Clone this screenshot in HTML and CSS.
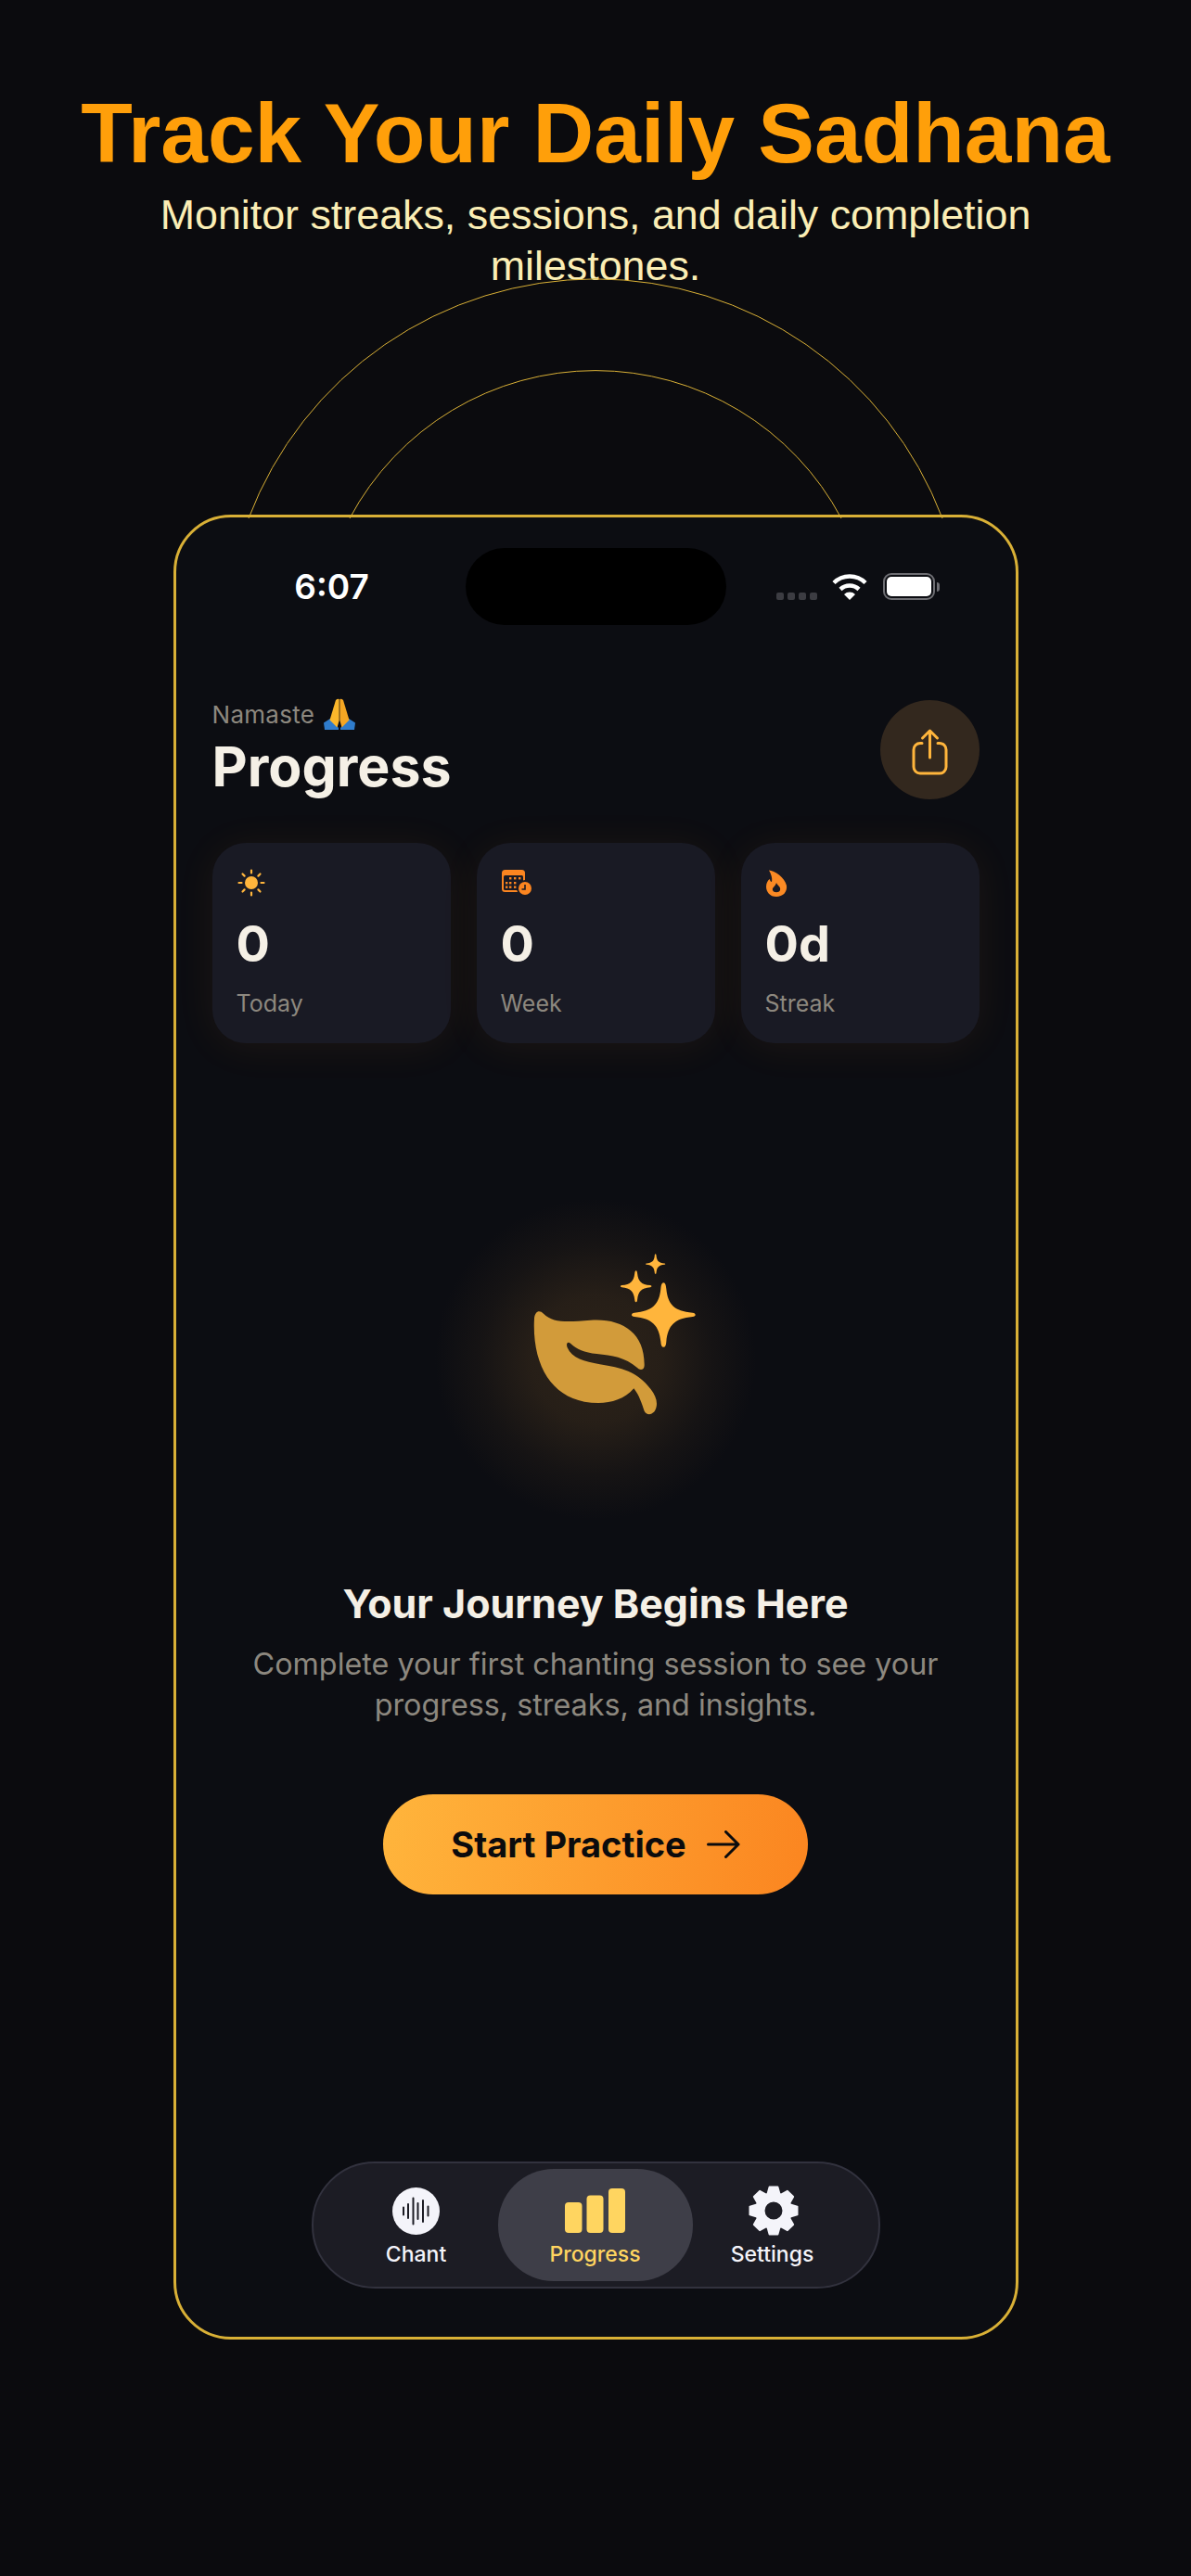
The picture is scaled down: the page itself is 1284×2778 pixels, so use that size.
FILE: index.html
```html
<!DOCTYPE html>
<html lang="en">
<head>
    <meta charset="UTF-8">
    <meta name="viewport" content="width=device-width, initial-scale=1.0">
    <title>Track Your Daily Sadhana</title>
    <link rel="stylesheet" href="styles.css">
</head>
<body>
    <!-- Marketing header -->
    <header class="promo">
        <h1 class="promo-title">Track Your Daily Sadhana</h1>
        <p class="promo-sub">Monitor streaks, sessions, and daily completion milestones.</p>
    </header>

    <!-- Decorative rings behind the phone -->
    <svg class="rings" width="1284" height="570" viewBox="0 0 1284 570" fill="none">
        <path d="M268 559A400 400 0 0 1 1016 559"/>
        <path d="M377 559A300 300 0 0 1 907 559"/>
    </svg>

    <main class="phone">
        <div class="status-bar">
            <div class="status-time">6:07</div>
            <div class="island"></div>
            <div class="status-icons">
                <div class="signal"><span></span><span></span><span></span><span></span></div>
                <svg class="wifi" width="38" height="28" viewBox="0 0 38 28" fill="none" stroke="#fff" stroke-width="4.5">
                    <path d="M2 9.5A24 24 0 0 1 36 9.5"/>
                    <path d="M9 16.5A14.5 14.5 0 0 1 29 16.5"/>
                    <path d="M13 22A8.5 8.5 0 0 1 25 22L19 28Z" fill="#fff" stroke="none"/>
                </svg>
                <div class="battery"><div class="battery-fill"></div></div>
                <div class="battery-tip"></div>
            </div>
        </div>

        <div class="head-row">
            <div>
                <div class="greeting">
                    <span>Namaste</span>
                    <svg width="36" height="34" viewBox="0 0 36 34">
                        <path d="M1 26.5L8 22L17 32V34H2Z" fill="#2f7ccc"/>
                        <path d="M35 26.5L28 22L19 32V34H34Z" fill="#2f7ccc"/>
                        <path d="M14 2Q16 0 17.6 1L17.6 24L15.5 31.5L7.5 23.5Z" fill="#fbb72b"/>
                        <path d="M22 2Q20 0 18.4 1L18.4 24L20.5 31.5L28.5 23.5Z" fill="#f5a623"/>
                    </svg>
                </div>
                <h2 class="page-title">Progress</h2>
            </div>
            <button class="share-btn">
                <svg width="107" height="107" viewBox="0 0 107 107" fill="none" stroke="#ffb53c" stroke-width="3" stroke-linecap="round" stroke-linejoin="round">
                    <path d="M45 46.5H43a7 7 0 0 0-7 7V72a7 7 0 0 0 7 7H64a7 7 0 0 0 7-7V53.5a7 7 0 0 0-7-7H62"/>
                    <path d="M53.5 62V33M45.5 41L53.5 33L61.5 41"/>
                </svg>
            </button>
        </div>

        <!-- Stat cards -->
        <section class="stats">
            <div class="stat-card">
                <div class="stat-icon">
                    <svg width="34" height="34" viewBox="0 0 34 34" stroke="#ffb53c" stroke-width="2.2" stroke-linecap="round">
                        <circle cx="16" cy="16" r="7" fill="#ffb53c" stroke="none"/>
                        <path d="M16 2.5V5.5M16 26.5V29.5M2.5 16H5.5M26.5 16H29.5M6.5 6.5L8.6 8.6M23.4 23.4L25.5 25.5M6.5 25.5L8.6 23.4M23.4 8.6L25.5 6.5"/>
                    </svg>
                </div>
                <div class="stat-value">0</div>
                <div class="stat-label">Today</div>
            </div>
            <div class="stat-card">
                <div class="stat-icon">
                    <svg width="34" height="34" viewBox="0 0 34 34">
                        <rect x="1" y="2" width="25" height="24" rx="3.5" fill="#fb8520"/>
                        <rect x="3" y="8" width="21" height="16" rx="1.5" fill="#191a24"/>
                        <g fill="#fb8520">
                            <rect x="9" y="10" width="2.4" height="2.4"/><rect x="14" y="10" width="2.4" height="2.4"/><rect x="19" y="10" width="2.4" height="2.4"/>
                            <rect x="5" y="15" width="2.4" height="2.4"/><rect x="9" y="15" width="2.4" height="2.4"/><rect x="14" y="15" width="2.4" height="2.4"/>
                            <rect x="5" y="19.5" width="2.4" height="2.4"/><rect x="9" y="19.5" width="2.4" height="2.4"/><rect x="14" y="19.5" width="2.4" height="2.4"/>
                        </g>
                        <circle cx="26" cy="22" r="9" fill="#191a24"/>
                        <circle cx="26" cy="22" r="7" fill="#fb8520"/>
                        <path d="M26 18V23H22.5" fill="none" stroke="#191a24" stroke-width="1.6"/>
                    </svg>
                </div>
                <div class="stat-value">0</div>
                <div class="stat-label">Week</div>
            </div>
            <div class="stat-card">
                <div class="stat-icon">
                    <svg width="34" height="34" viewBox="0 0 34 34">
                        <path d="M4 2.5C10 3 21 10 23 19C24 26 19 31 12 31C5 31 1 26 1 20C1 16 3 13 5 12C5 14 6 15 7 15C8 11 6 6 4 2.5Z" fill="#fb8a24"/>
                        <path d="M12 16C13 19 17 20 16 24C15 27 9 27 8 24C7 21 11 20 12 16Z" fill="#191a24"/>
                    </svg>
                </div>
                <div class="stat-value">0d</div>
                <div class="stat-label">Streak</div>
            </div>
        </section>

        <!-- Empty state -->
        <section class="empty">
            <div class="empty-glow">
                <svg width="346" height="346" viewBox="87 9 1038 1038">
                    <path d="M408 395C410 372 425 366 438 380C470 412 520 406 590 401C690 394 766 440 764 548C764 562 750 564 742 556C700 520 660 515 610 510C570 505 545 495 525 476C515 468 510 478 515 490C530 525 570 535 620 544C690 556 740 565 785 625C800 645 808 665 802 685C796 708 772 712 764 695C755 670 748 645 730 622C690 668 630 675 570 665C460 645 400 540 408 395Z" fill="#d29b3a"/>
                    <g fill="#ffb53c">
                        <path transform="translate(826 383)" d="M0-103C6-103 8-93 9-83C14-33 34-11 94-6C106-5 106 6 94 7C34 12 14 37 9 87C8 99 6 105 0 105C-6 105-8 99-9 87C-14 37-36 12-94 7C-106 6-106-5-94-6C-36-11-14-33-9-83C-8-93-6-103 0-103Z"/>
                        <path transform="translate(737 291) scale(.49)" d="M0-103C6-103 8-93 9-83C14-33 34-11 94-6C106-5 106 6 94 7C34 12 14 37 9 87C8 99 6 105 0 105C-6 105-8 99-9 87C-14 37-36 12-94 7C-106 6-106-5-94-6C-36-11-14-33-9-83C-8-93-6-103 0-103Z"/>
                        <path transform="translate(800 219) scale(.31)" d="M0-103C6-103 8-93 9-83C14-33 34-11 94-6C106-5 106 6 94 7C34 12 14 37 9 87C8 99 6 105 0 105C-6 105-8 99-9 87C-14 37-36 12-94 7C-106 6-106-5-94-6C-36-11-14-33-9-83C-8-93-6-103 0-103Z"/>
                    </g>
                </svg>
            </div>
            <h3 class="empty-title">Your Journey Begins Here</h3>
            <p class="empty-text">Complete your first chanting session to see your progress, streaks, and insights.</p>
            <button class="start-btn">
                <span>Start Practice</span>
                <svg width="36" height="30" viewBox="0 0 36 30" fill="none" stroke="#0b0b0d" stroke-width="3" stroke-linecap="round" stroke-linejoin="round">
                    <path d="M1.5 15H34M20.5 1.5L34 15L20.5 28.5"/>
                </svg>
            </button>
        </section>

        <!-- Tab bar -->
        <nav class="tabbar">
            <div class="tab tab-chant">
                <div class="tab-icon">
                    <svg width="51" height="51" viewBox="0 0 51 51">
                        <circle cx="25.5" cy="25.5" r="25.5" fill="#f4f4fa"/>
                        <path d="M12 21.5V29.5M17 18V33M22.5 11.5V39.5M27.5 17V34M33 14V37M38.5 20.5V30.5" stroke="#1c1c24" stroke-width="2" stroke-linecap="round"/>
                    </svg>
                </div>
                <span class="tab-label">Chant</span>
            </div>
            <div class="tab tab-progress active">
                <div class="tab-icon">
                    <svg width="65" height="48" viewBox="0 0 65 48" fill="#ffd560">
                        <rect x="0" y="15" width="18.5" height="33" rx="4"/>
                        <rect x="23.5" y="7.5" width="18" height="40.5" rx="4"/>
                        <rect x="47" y="0" width="18" height="48" rx="4"/>
                    </svg>
                </div>
                <span class="tab-label">Progress</span>
            </div>
            <div class="tab tab-settings">
                <div class="tab-icon">
                    <svg width="54" height="54" viewBox="0 0 54 54" fill="#f4f4fa">
                        <path fill-rule="evenodd" d="M27 7a20 20 0 1 0 0 40a20 20 0 1 0 0-40ZM27 17.5a9.5 9.5 0 1 1 0 19a9.5 9.5 0 1 1 0-19Z"/>
                        <g stroke="#f4f4fa" stroke-width="2" stroke-linejoin="round">
                            <path d="M20.5 9L22.6 1.5H31.4L33.5 9Z"/>
                            <path d="M20.5 9L22.6 1.5H31.4L33.5 9Z" transform="rotate(45 27 27)"/>
                            <path d="M20.5 9L22.6 1.5H31.4L33.5 9Z" transform="rotate(90 27 27)"/>
                            <path d="M20.5 9L22.6 1.5H31.4L33.5 9Z" transform="rotate(135 27 27)"/>
                            <path d="M20.5 9L22.6 1.5H31.4L33.5 9Z" transform="rotate(180 27 27)"/>
                            <path d="M20.5 9L22.6 1.5H31.4L33.5 9Z" transform="rotate(225 27 27)"/>
                            <path d="M20.5 9L22.6 1.5H31.4L33.5 9Z" transform="rotate(270 27 27)"/>
                            <path d="M20.5 9L22.6 1.5H31.4L33.5 9Z" transform="rotate(315 27 27)"/>
                        </g>
                    </svg>
                </div>
                <span class="tab-label">Settings</span>
            </div>
        </nav>
    </main>
</body>
</html>
```

FILE: styles.css
```css
body {
    margin: 0;
    height: 2778px;
    background-color: #0b0b0e;
    font-family: Inter, "Noto Sans", sans-serif;
    position: relative;
    overflow: hidden;
}

h1, h2, h3, p {
    margin: 0;
}

button {
    border: none;
    padding: 0;
    font-family: inherit;
}

/* Marketing header */
.promo {
    padding-top: 94px;
    text-align: center;
    font-family: "Liberation Sans", Arial, sans-serif;
}
.promo-title {
    font-size: 91px;
    line-height: 100px;
    font-weight: 700;
    color: #ff9f0a;
}
.promo-sub {
    width: 1000px;
    margin: 10px auto 0;
    font-size: 44.8px;
    line-height: 55px;
    color: #fbeeb5;
}

.rings {
    position: absolute;
    left: 0;
    top: 0;
    z-index: 2;
}
.rings path {
    stroke: #d9b036;
    stroke-width: 1;
}

/* Phone frame */
.phone {
    box-sizing: border-box;
    width: 911px;
    height: 1968px;
    margin: 241px auto 0;
    border: 3px solid #d9b036;
    border-radius: 62px;
    background-color: #0c0d12;
    display: flex;
    flex-direction: column;
    position: relative;
    z-index: 1;
}

.status-bar {
    display: grid;
    grid-template-columns: 1fr 281px 1fr;
    align-items: center;
    margin-top: 33px;
    height: 83px;
}
.status-time {
    text-align: center;
    padding-left: 24px;
    font-size: 37px;
    font-weight: 600;
    color: #fff;
}
.island {
    height: 83px;
    border-radius: 42px;
    background-color: #000;
}
.status-icons {
    display: flex;
    align-items: center;
    padding-left: 54px;
}
.signal {
    display: flex;
    gap: 4px;
    align-self: flex-end;
    margin-right: 16px;
}
.signal span {
    width: 8px;
    height: 8px;
    border-radius: 2px;
    background-color: #3c3c42;
}
.battery {
    box-sizing: border-box;
    width: 56px;
    height: 29px;
    margin-left: 17px;
    padding: 2px;
    border: 2px solid #6e6e73;
    border-radius: 9px;
}
.battery-fill {
    height: 100%;
    border-radius: 5px;
    background-color: #fff;
}
.battery-tip {
    width: 3px;
    height: 10px;
    margin-left: 2px;
    border-radius: 0 3px 3px 0;
    background-color: #6e6e73;
}

/* Greeting row */
.head-row {
    display: flex;
    justify-content: space-between;
    align-items: center;
    margin-top: 79px;
    padding: 0 39px;
}
.greeting {
    display: flex;
    align-items: center;
    gap: 9px;
    height: 34px;
    margin-bottom: 4px;
    font-size: 26px;
    letter-spacing: 0.3px;
    color: #8d887f;
}
.page-title {
    font-size: 59px;
    line-height: 72px;
    font-weight: 700;
    color: #f5f0e6;
}
.share-btn {
    width: 107px;
    height: 107px;
    border-radius: 50%;
    background-color: #33281e;
}
.share-btn svg {
    display: block;
}

/* Stat cards */
.stats {
    display: grid;
    grid-template-columns: repeat(3, 257px);
    justify-content: space-between;
    margin-top: 46px;
    padding: 0 39px;
}
.stat-card {
    box-sizing: border-box;
    height: 216px;
    padding: 27px 26px 0;
    border-radius: 36px;
    background-color: #191a24;
    box-shadow: 0 4px 44px rgba(255, 160, 40, 0.07);
}
.stat-icon {
    height: 34px;
}
.stat-icon svg {
    display: block;
}
.stat-value {
    margin-top: 18px;
    font-size: 54px;
    line-height: 60px;
    font-weight: 700;
    color: #f5f0e6;
}
.stat-label {
    margin-top: 18px;
    font-size: 25px;
    line-height: 32px;
    color: #8d887f;
}

/* Empty state */
.empty {
    display: flex;
    flex-direction: column;
    align-items: center;
    margin-top: 168px;
}
.empty-glow {
    width: 346px;
    height: 346px;
    background: radial-gradient(circle closest-side, #2d2319 0%, rgba(45, 35, 25, 0.8) 40%, rgba(45, 35, 25, 0.3) 72%, rgba(45, 35, 25, 0) 100%);
}
.empty-glow svg {
    display: block;
}
.empty-title {
    margin-top: 65px;
    font-size: 43px;
    line-height: 50px;
    font-weight: 700;
    color: #f5f0e6;
}
.empty-text {
    width: 760px;
    margin-top: 19px;
    font-size: 32.3px;
    line-height: 44px;
    text-align: center;
    color: #8d887f;
}
.start-btn {
    display: flex;
    align-items: center;
    justify-content: center;
    gap: 22px;
    width: 458px;
    height: 108px;
    margin-top: 74px;
    border-radius: 54px;
    background: linear-gradient(100deg, #ffb53c 0%, #fb8520 100%);
    font-size: 38px;
    font-weight: 700;
    color: #0b0b0d;
}

/* Tab bar */
.tabbar {
    box-sizing: border-box;
    display: flex;
    align-self: flex-start;
    width: 613px;
    height: 137px;
    margin: auto 0 52px 146px;
    padding: 6px 23px;
    border: 2px solid #32323e;
    border-radius: 68px;
    background-color: #1c1c24;
}
.tab {
    box-sizing: border-box;
    display: flex;
    flex-direction: column;
    align-items: center;
    gap: 5px;
    padding-top: 18px;
    border-radius: 60px;
    font-size: 23px;
    line-height: 30px;
    font-weight: 500;
    color: #f4f4fa;
}
.tab-chant {
    width: 176px;
}
.tab-progress {
    width: 210px;
}
.tab-settings {
    width: 172px;
}
.tab.active {
    background-color: #3e3e48;
    color: #ffd560;
}
.tab-icon {
    display: flex;
    align-items: flex-end;
    justify-content: center;
    height: 54px;
}
.tab-icon svg {
    display: block;
}
.tab-chant svg {
    margin-bottom: 1px;
}
.tab-progress svg {
    margin-bottom: 3px;
}
.tab-settings svg {
    margin-left: 3px;
}
```
